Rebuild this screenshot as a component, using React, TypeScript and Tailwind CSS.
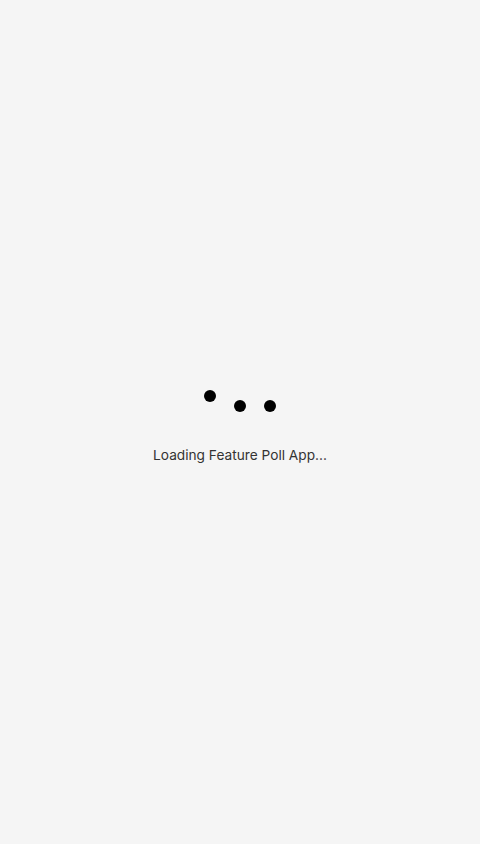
export default function App() {
  return (
    <div className="min-h-screen w-full bg-[#f5f5f5] flex flex-col items-center justify-center" style={{ fontFamily: 'Inter, "Noto Sans", sans-serif' }}>
      {/* Bouncing dots */}
      <div className="flex items-end gap-[18px] h-[33px]">
        <span className="w-3 h-3 rounded-full bg-black mb-[10px]" />
        <span className="w-3 h-3 rounded-full bg-black" />
        <span className="w-3 h-3 rounded-full bg-black" />
      </div>
      <p className="mt-[33px] text-[13.7px] leading-5 text-[#333333]">Loading Feature Poll App...</p>
    </div>
  )
}
